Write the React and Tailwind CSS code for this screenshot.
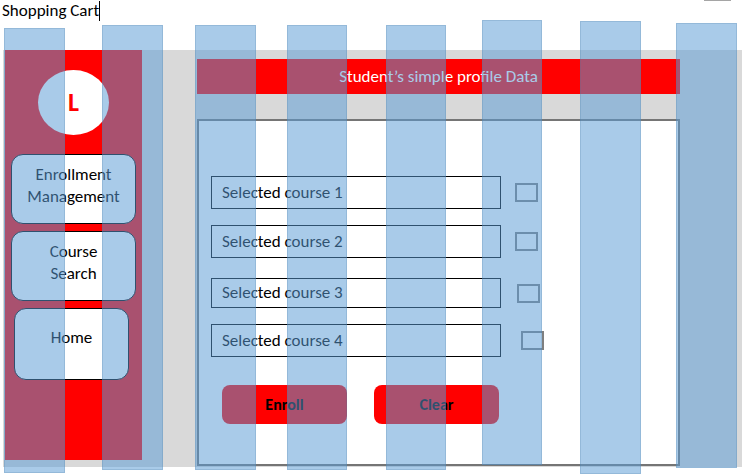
import React from 'react';

const navItems = [
  { lines: ['Enrollment', 'Management'], box: 'w-[125px] h-[70px] pb-1.5' },
  { lines: ['Course', 'Search'], box: 'w-[125px] h-[70px] pb-1.5' },
  { lines: ['Home'], box: 'w-[115px] h-[72px] pb-3 mr-1' },
];

const courses = [
  { id: 'course-1', name: 'Selected course 1', row: 'gap-3.5', box: 'h-[33px]' },
  { id: 'course-2', name: 'Selected course 2', row: 'gap-3.5 mt-4', box: 'h-[33px]' },
  { id: 'course-3', name: 'Selected course 3', row: 'gap-4 mt-5', box: 'h-[30px]' },
  { id: 'course-4', name: 'Selected course 4', row: 'gap-5 mt-4', box: 'h-[33px]' },
];

// Translucent column guides laid over the wireframe.
const guides = [
  'left-[4px] top-[28px] w-[61px] h-[445px]',
  'left-[102px] top-[25px] w-[61px] h-[445px]',
  'left-[195px] top-[25px] w-[61px] h-[445px]',
  'left-[287px] top-[25px] w-[60px] h-[445px]',
  'left-[386px] top-[25px] w-[60px] h-[445px]',
  'left-[482px] top-[20px] w-[60px] h-[445px]',
  'left-[580px] top-[21px] w-[61px] h-[453px]',
  'left-[676px] top-[23px] w-[61px] h-[445px]',
];

function Sidebar() {
  return (
    <nav className="flex h-[410px] w-[137px] shrink-0 flex-col items-center bg-[#ff0000] pt-5">
      <div className="flex h-[65px] w-[71px] items-center justify-center rounded-[50%] bg-white text-[26px] font-bold text-[#ff0000]">
        L
      </div>
      <div className="mt-[19px] flex flex-col items-center gap-[7px]">
        {navItems.map((item) => (
          <button
            key={item.lines[0]}
            type="button"
            className={`flex flex-col items-center justify-center rounded-xl border border-black bg-white leading-[22px] ${item.box}`}
          >
            {item.lines.map((line) => (
              <span key={line}>{line}</span>
            ))}
          </button>
        ))}
      </div>
    </nav>
  );
}

export default function App() {
  return (
    <div className="relative overflow-hidden bg-white pb-[7px] font-['Carlito','Lato',sans-serif] text-[17px] text-black">
      <div className="absolute top-0 right-[17px] h-px w-[27px] bg-[#a5a5a5]" />
      <header className="flex h-[50px] items-start pt-px pl-0.5">
        <h1 className="leading-5">Shopping Cart</h1>
        <span className="h-5 w-px bg-black" />
      </header>

      <div className="mr-1.5 ml-[3px] flex h-[417px] bg-[#d9d9d9] pl-0.5">
        <Sidebar />
        <main className="mr-[62px] ml-[55px] flex flex-1 flex-col">
          <h2 className="mt-[9px] flex h-[35px] items-center justify-center bg-[#ff0000] text-white">
            Student’s simple profile Data
          </h2>
          <form className="mt-[25px] h-[347px] border-2 border-[#757575] bg-white pt-[55px] pl-3">
            {courses.map((course) => (
              <div key={course.id} className={`flex items-center ${course.row}`}>
                <label
                  htmlFor={course.id}
                  className={`flex w-[290px] items-center border border-black bg-white pl-2.5 ${course.box}`}
                >
                  {course.name}
                </label>
                <input
                  id={course.id}
                  type="checkbox"
                  className="h-[19px] w-[23px] appearance-none border-2 border-[#7f7f7f] bg-white"
                />
              </div>
            ))}
            <div className="mt-7 ml-[11px] flex gap-[27px] text-base font-bold">
              <button type="button" className="h-[39px] w-[125px] rounded-lg bg-[#ff0000]">
                Enroll
              </button>
              <button type="button" className="h-[39px] w-[125px] rounded-lg bg-[#ff0000]">
                Clear
              </button>
            </div>
          </form>
        </main>
      </div>

      <div className="pointer-events-none absolute inset-0" aria-hidden="true">
        {guides.map((guide) => (
          <div
            key={guide}
            className={`absolute border border-[#41719c]/20 bg-[#5b9bd5]/52 ${guide}`}
          />
        ))}
      </div>
    </div>
  );
}
